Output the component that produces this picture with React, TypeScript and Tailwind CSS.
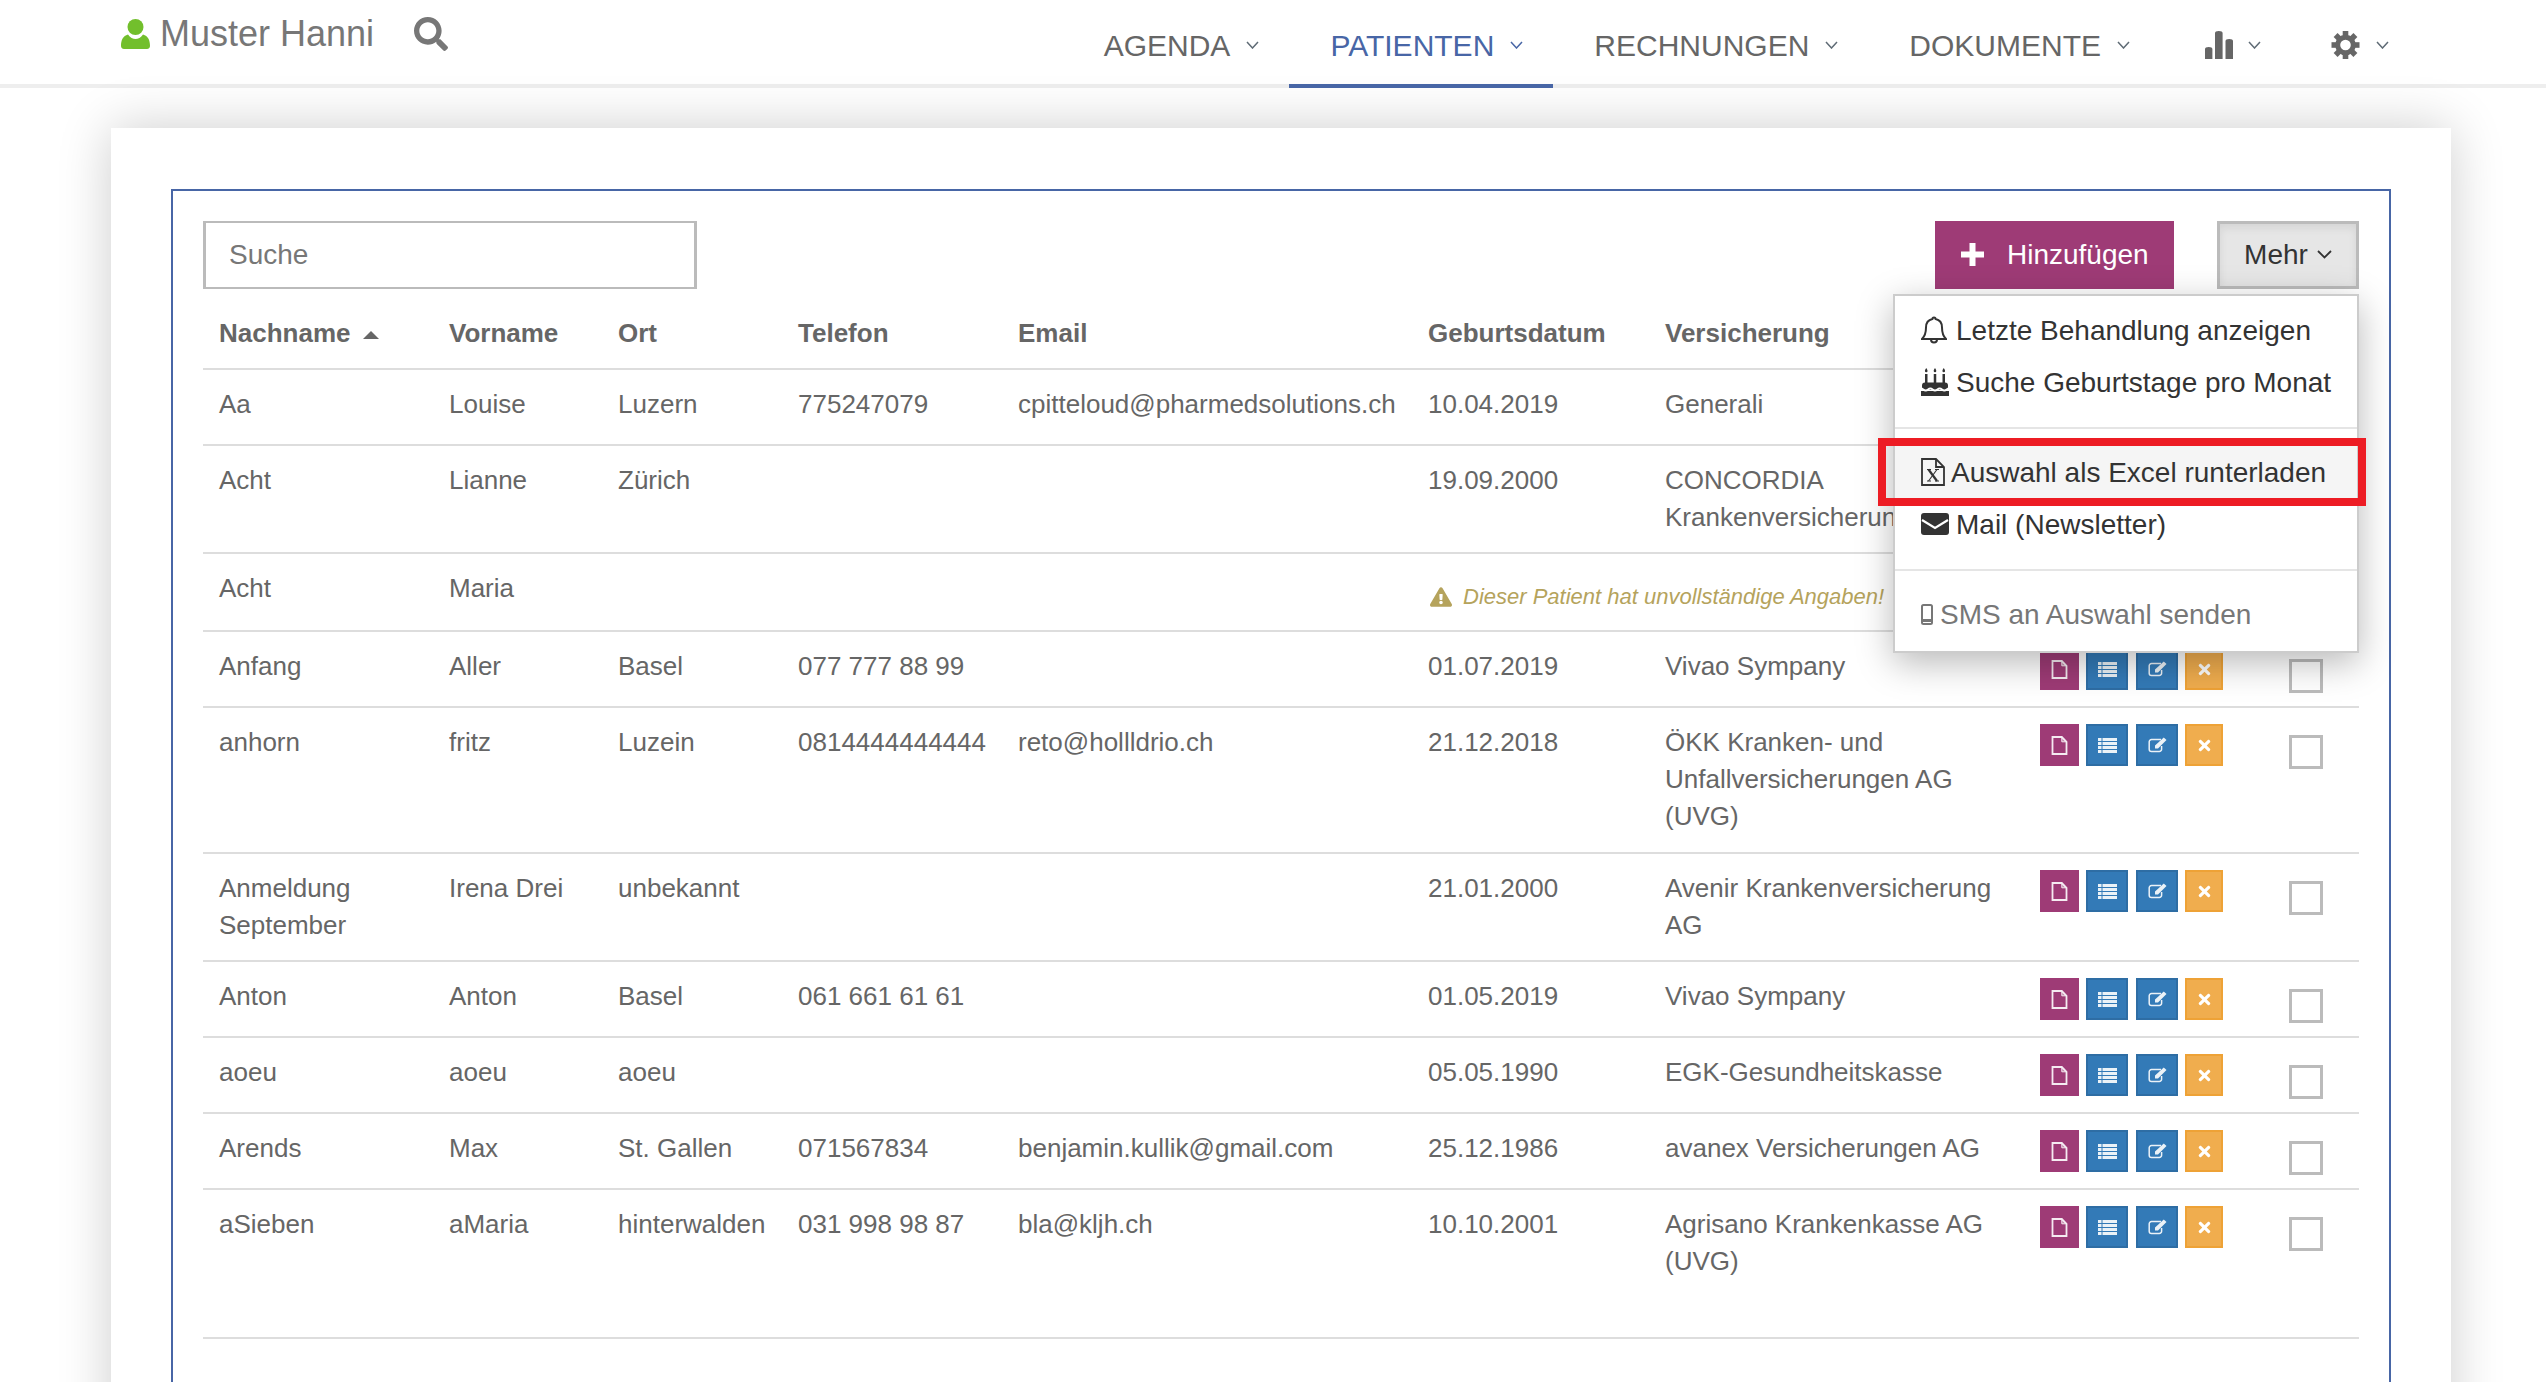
import React from "react";
import { FaExclamationTriangle, FaTimes, FaSearch } from "react-icons/fa";

const Chev = ({ c = "#5f6b75" }: { c?: string }) => (
  <svg width="13" height="8" viewBox="0 0 13 8" fill="none" stroke={c} strokeWidth="1.500"><path d="M1 1l5.500 6L12 1" /></svg>
);

const NavItem = ({ active, icon, label, pl = "pl-[41px]" }: { active?: boolean; icon?: React.ReactNode; label?: string; pl?: string }) => (
  <div className={`flex h-[88px] items-center gap-[16px] border-b-4 pr-[30px] pt-[6px] ${pl} ${active ? "border-[#4866a6] text-[#4866a6]" : "border-transparent text-[#666]"}`}>
    {label ? <span className="text-[30px] leading-[37px]">{label}</span> : icon}
    <Chev c={active ? "#4866a6" : "#5f6b75"} />
  </div>
);

const FileIcon = () => (
  <svg width="17" height="19" viewBox="0 0 17 19" fill="none" stroke="#fff" strokeWidth="1.800" className="opacity-90">
    <path d="M1.500 1h9.300l4.700 4.800V18h-14z" /><path d="M10.800 1v4.800h4.700" fill="#fff" fillOpacity=".4" strokeWidth="1" />
  </svg>
);
const ListIcon = () => (
  <svg width="19" height="15" viewBox="0 0 19 15" fill="#fff" className="opacity-90">
    {[0, 4, 8, 12].map((y) => (
      <g key={y}><rect x="0" y={y} width="3.500" height="3" /><rect x="4.500" y={y} width="14.500" height="3" /></g>
    ))}
  </svg>
);
const EditIcon = () => (
  <svg width="19" height="16" viewBox="0 0 19 16" fill="none" className="opacity-90">
    <path d="M13 2.500H3.500a2.300 2.300 0 0 0-2.300 2.300v7.400a2.300 2.300 0 0 0 2.300 2.300h7.800a2.300 2.300 0 0 0 2.300-2.300V9" stroke="#fff" strokeWidth="1.500" />
    <path d="M15.800.5L18.500 3 10 11.500H7v-3z" fill="#fff" />
  </svg>
);

const Gear = () => (
  <svg width="29" height="28" viewBox="0 0 29 28" fill="#666">
    <g transform="translate(14.500 14)">
      {[0, 45, 90, 135, 180, 225, 270, 315].map((a) => (
        <rect key={a} x="-2.800" y="-14" width="5.600" height="7" transform={`rotate(${a})`} />
      ))}
      <circle r="7.800" fill="none" stroke="#666" strokeWidth="5" />
    </g>
  </svg>
);

const Act = ({ w, cls, children }: { w: string; cls: string; children: React.ReactNode }) => (
  <div className={`flex h-[42px] items-center justify-center border-[2px] ${w} ${cls}`}>{children}</div>
);

const Actions = () => (
  <td className="border-b-2 border-[#ddd] pl-[15px] pt-[16px] align-top">
    <div className="flex">
      <Act w="w-[39px]" cls="border-[#9e3b76] bg-[#9e3b76]"><FileIcon /></Act>
      <Act w="ml-[7px] w-[42px]" cls="border-[#2e6da4] bg-[#337ab7]"><ListIcon /></Act>
      <Act w="ml-[8px] w-[42px]" cls="border-[#2e6da4] bg-[#337ab7]"><EditIcon /></Act>
      <Act w="ml-[7px] w-[38px]" cls="border-[#eea236] bg-[#f0ad4e]"><FaTimes className="h-[17px] w-[15px] text-white" /></Act>
    </div>
  </td>
);

const Check = () => (
  <td className="border-b-2 border-[#ddd] pl-[16px] pt-[27px] align-top">
    <input type="checkbox" className="block h-[34px] w-[34px] appearance-none border-[3px] border-[#bbb] bg-white" />
  </td>
);

const T = ({ children }: { children?: React.ReactNode }) => (
  <td className="border-b-2 border-[#ddd] pb-[16px] pl-[16px] pr-[8px] pt-[16px] align-top">{children}</td>
);

type Row = { h: string; c: string[]; warn?: boolean };
const rows: Row[] = [
  { h: "h-[76px]", c: ["Aa", "Louise", "Luzern", "775247079", "cpitteloud@pharmedsolutions.ch", "10.04.2019", "Generali"] },
  { h: "h-[107px]", c: ["Acht", "Lianne", "Zürich", "", "", "19.09.2000", "CONCORDIA Krankenversicherung"] },
  { h: "h-[78px]", c: ["Acht", "Maria", "", "", ""], warn: true },
  { h: "h-[76px]", c: ["Anfang", "Aller", "Basel", "077 777 88 99", "", "01.07.2019", "Vivao Sympany"] },
  { h: "h-[146px]", c: ["anhorn", "fritz", "Luzein", "0814444444444", "reto@hollldrio.ch", "21.12.2018", "ÖKK Kranken- und Unfallversicherungen AG (UVG)"] },
  { h: "h-[107px]", c: ["Anmeldung September", "Irena Drei", "unbekannt", "", "", "21.01.2000", "Avenir Krankenversicherung AG"] },
  { h: "h-[76px]", c: ["Anton", "Anton", "Basel", "061 661 61 61", "", "01.05.2019", "Vivao Sympany"] },
  { h: "h-[76px]", c: ["aoeu", "aoeu", "aoeu", "", "", "05.05.1990", "EGK-Gesundheitskasse"] },
  { h: "h-[76px]", c: ["Arends", "Max", "St. Gallen", "071567834", "benjamin.kullik@gmail.com", "25.12.1986", "avanex Versicherungen AG"] },
  { h: "h-[149px]", c: ["aSieben", "aMaria", "hinterwalden", "031 998 98 87", "bla@kljh.ch", "10.10.2001", "Agrisano Krankenkasse AG (UVG)"] },
];

const heads = ["Vorname", "Ort", "Telefon", "Email", "Geburtsdatum", "Versicherung"];
const Th = ({ children }: { children?: React.ReactNode }) => (
  <th className="border-b-2 border-[#ddd] pb-[16px] pl-[16px] pr-[8px] text-left align-bottom font-bold">{children}</th>
);

const MenuItem = ({ icon, children, grey, gap = "gap-[8px]" }: { icon: React.ReactNode; children: React.ReactNode; grey?: boolean; gap?: string }) => (
  <div className={`flex h-[52px] items-center pl-[26px] text-[28px] ${gap} ${grey ? "text-[#777]" : "text-[#333]"}`}>
    <span className="flex w-fit justify-center">{icon}</span>
    <span>{children}</span>
  </div>
);

export default function App() {
  return (
    <div className="h-[1382px] w-[2546px] overflow-hidden bg-white font-['Liberation_Sans',Arial,sans-serif] text-[26px] leading-[37px] text-[#666]">
      <header className="flex h-[88px] items-start border-b-4 border-[#eee] bg-white">
        <div className="ml-[121px] flex items-center pt-[15px]">
          <svg width="29" height="31" viewBox="0 0 29 31" fill="#72bf2c">
            <ellipse cx="14.500" cy="8" rx="8" ry="8" />
            <path d="M0 27c0-6 2-10 7-11.500 2 3 5 4.500 7.500 4.500s5.500-1.500 7.500-4.500c5 1.500 7 5.500 7 11.500 0 2-1.500 3-3 3H3c-1.500 0-3-1-3-3z" />
          </svg>
          <span className="ml-[10px] text-[36px] leading-[38px] text-[#777]">Muster Hanni</span>
          <FaSearch className="ml-[40px] h-[34px] w-[34px] text-[#777]" />
        </div>
        <nav className="ml-auto mr-[127px] flex">
          <NavItem label="AGENDA" />
          <NavItem label="PATIENTEN" active />
          <NavItem label="RECHNUNGEN" />
          <NavItem label="DOKUMENTE" />
          <NavItem
            pl="pl-[45px]"
            icon={
              <svg width="28" height="28" viewBox="0 0 28 28" fill="#666" className="mr-[-1px]">
                <path d="M0 28V18q0-2 3.700-2t3.700 2v10zM10 28V2q0-2 3.800-2t3.800 2v26zM20.500 28V10q0-2 3.750-2T28 10v18z" />
              </svg>
            }
          />
          <NavItem pl="pl-[40px]" icon={<Gear />} />
        </nav>
      </header>

      <main className="ml-[111px] mt-[40px] w-[2340px] bg-white px-[60px] pt-[61px] shadow-[0_0_50px_rgba(0,0,0,0.2)]">
        <section className="min-h-[1300px] border-2 border-b-0 border-[#4866a6] px-[30px] pt-[30px]">
          <div className="relative flex h-[68px] items-stretch">
            <input
              placeholder="Suche"
              className="h-[68px] w-[494px] border-x-[3px] border-y-[2px] border-[#bbb] bg-white pl-[23px] text-[28px] outline-none placeholder:text-[#777]"
            />
            <button className="ml-auto flex w-[239px] items-center bg-[#9e3b76] pb-[1px] pl-[26px] text-[28px] text-white">
              <svg width="23" height="23" viewBox="0 0 23 23" fill="#fff"><path d="M8.500 0h6v8.500H23v6h-8.500V23h-6v-8.500H0v-6h8.500z" /></svg>
              <span className="ml-[23px]">Hinzufügen</span>
            </button>
            <button className="ml-[43px] flex w-[142px] items-center justify-center gap-[9px] border-[3px] border-[#bbb] bg-[#e6e6e6] pb-[1px] text-[28px] text-[#333] shadow-[inset_0_4px_8px_rgba(0,0,0,0.08)]">
              <span>Mehr</span>
              <svg width="15" height="9" viewBox="0 0 15 9" fill="none" stroke="#333" strokeWidth="1.800"><path d="M1 1l6.500 6.500L14 1" /></svg>
            </button>

            <div className="absolute right-0 top-[73px] z-20 w-[466px] border-2 border-[#ccc] bg-white pb-[11px] pt-[8px] text-[#333] shadow-[0_10px_34px_rgba(0,0,0,0.28)]">
              <MenuItem
                gap="gap-[9px]"
                icon={
                  <svg width="26" height="29" viewBox="0 0 26 29" fill="none" stroke="#333" strokeWidth="2">
                    <path d="M13 1.500c1 0 1.600.7 1.600 1.500 4 .8 6.400 4 6.400 8.500 0 5 1 8.500 4 11.500H1c3-3 4-6.500 4-11.500 0-4.500 2.400-7.700 6.400-8.500 0-.8.600-1.500 1.600-1.500z" />
                    <path d="M10 23.500a3 3 0 0 0 6 0" />
                  </svg>
                }
              >
                Letzte Behandlung anzeigen
              </MenuItem>
              <MenuItem
                gap="gap-[7px]"
                icon={
                  <svg width="28" height="28" viewBox="0 0 28 28" fill="#333">
                    <path d="M4 6h2.500v9H4zM12.750 6h2.500v9h-2.500zM21.500 6H24v9h-2.500z" />
                    <path d="M5.250 0c1 1.500 1.300 2.200 1.300 3a1.300 1.300 0 0 1-2.600 0c0-.8.300-1.500 1.300-3zM14 0c1 1.500 1.300 2.200 1.300 3a1.300 1.300 0 0 1-2.600 0c0-.8.300-1.500 1.300-3zM22.750 0c1 1.500 1.300 2.200 1.300 3a1.300 1.300 0 0 1-2.600 0c0-.8.300-1.500 1.300-3z" />
                    <path d="M1 22v-4.500a3 3 0 0 1 3-3h20a3 3 0 0 1 3 3V22zM0 23h28v5H0z" />
                    <path d="M0 20.500c2.300 0 2.300 2 4.700 2s2.300-2 4.600-2 2.400 2 4.700 2 2.400-2 4.700-2 2.300 2 4.600 2 2.400-2 4.700-2" fill="none" stroke="#fff" strokeWidth="1.800" />
                  </svg>
                }
              >
                Suche Geburtstage pro Monat
              </MenuItem>
              <div className="mb-[17px] mt-[19px] h-[2px] bg-[#e5e5e5]" />
              <div className="relative bg-[#f5f5f5]">
                <MenuItem
                  gap="gap-[6px]"
                  icon={
                    <svg width="24" height="28" viewBox="0 0 24 28" fill="none" stroke="#333" strokeWidth="1.800">
                      <path d="M1 1h14l8 8v18H1z" /><path d="M15 1v8h8" />
                      <path d="M7.500 11.500l8.500 11.500" strokeWidth="2.200" /><path d="M16 11.500L7.500 23" strokeWidth="1.100" />
                      <path d="M6 11.500h4M14 11.500h4M6 23h4M14 23h4" strokeWidth="1" />
                    </svg>
                  }
                >
                  Auswahl als Excel runterladen
                </MenuItem>
                <div className="absolute -bottom-2 -left-[17px] -right-[9px] -top-2 border-[8px] border-[#ed1c24]" />
              </div>
              <MenuItem
                gap="gap-[7px]"
                icon={
                  <svg width="28" height="22" viewBox="0 0 28 22" fill="none">
                    <rect width="28" height="22" rx="3" fill="#333" />
                    <path d="M1 7l13 8 13-8" stroke="#fff" strokeWidth="2.200" />
                  </svg>
                }
              >
                Mail (Newsletter)
              </MenuItem>
              <div className="mb-[17px] mt-[19px] h-[2px] bg-[#e5e5e5]" />
              <MenuItem
                grey
                gap="gap-[7px]"
                icon={
                  <svg width="12" height="21" viewBox="0 0 12 21" fill="none" stroke="#777" strokeWidth="2">
                    <rect x="1" y="1" width="10" height="19" rx="1.500" /><path d="M1 16.500h10" strokeWidth="3" />
                  </svg>
                }
              >
                SMS an Auswahl senden
              </MenuItem>
            </div>
          </div>

          <table className="w-[2156px] table-fixed border-separate border-spacing-0">
            <colgroup>
              <col className="w-[230px]" /><col className="w-[169px]" /><col className="w-[180px]" /><col className="w-[220px]" />
              <col className="w-[410px]" /><col className="w-[237px]" /><col className="w-[376px]" /><col className="w-[248px]" /><col className="w-[86px]" />
            </colgroup>
            <thead>
              <tr className="h-[81px]">
                <Th>
                  <span className="flex items-center">
                    Nachname
                    <svg width="16" height="8" viewBox="0 0 16 8" fill="#666" className="ml-[12px] mt-[3px]"><path d="M8 0l8 8H0z" /></svg>
                  </span>
                </Th>
                {heads.map((h) => <Th key={h}>{h}</Th>)}
                <Th /><Th />
              </tr>
            </thead>
            <tbody>
              {rows.map((r, i) => (
                <tr key={i} className={r.h}>
                  {r.c.map((x, j) => <T key={j}>{x}</T>)}
                  {r.warn && (
                    <td colSpan={2} className="border-b-2 border-[#ddd] pl-[18px] pt-[28px] align-top text-[22px] leading-[30px] text-[#b5a35c]">
                      <span className="flex items-center whitespace-nowrap">
                        <FaExclamationTriangle className="h-[20px] w-[22px]" />
                        <i className="ml-[11px]">Dieser Patient hat unvollständige Angaben!</i>
                      </span>
                    </td>
                  )}
                  <Actions />
                  <Check />
                </tr>
              ))}
            </tbody>
          </table>
        </section>
      </main>
    </div>
  );
}
